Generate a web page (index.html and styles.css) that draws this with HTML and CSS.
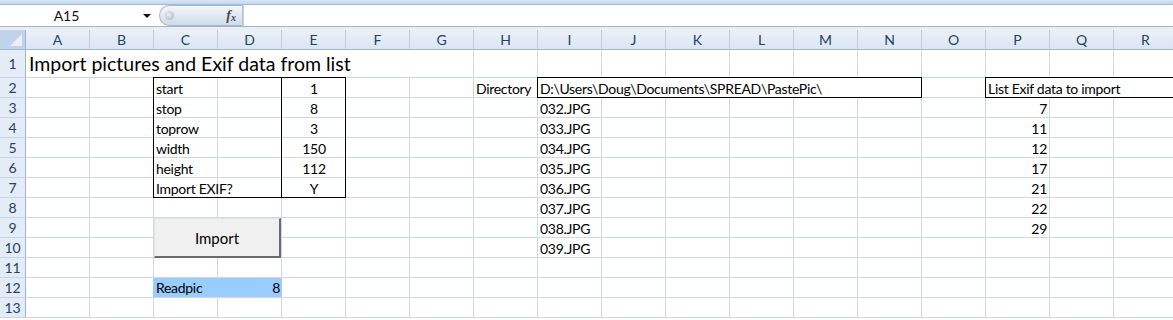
FILE: index.html
```html
<!DOCTYPE html>
<html lang="en">
<head>
  <meta charset="UTF-8" />
  <title>PastePic - Excel</title>
  <link rel="stylesheet" href="styles.css">
</head>
<body>
  <!-- Formula bar -->
  <div class="topband"></div>
  <div class="formula-bar">
    <div class="name-box">
      <span class="name">A15</span>
      <span class="caret"></span>
    </div>
    <div class="fx-pill">
      <span class="knob"></span>
      <span class="fx">f<sub>x</sub></span>
    </div>
    <div class="formula-input"></div>
  </div>
  <div class="bar-gap"></div>

  <!-- Sheet -->
  <div class="sheet">
    <div class="corner"><span class="corner-tri"></span></div>
    <div class="col-head">A</div>
    <div class="col-head">B</div>
    <div class="col-head">C</div>
    <div class="col-head">D</div>
    <div class="col-head">E</div>
    <div class="col-head">F</div>
    <div class="col-head">G</div>
    <div class="col-head">H</div>
    <div class="col-head">I</div>
    <div class="col-head">J</div>
    <div class="col-head">K</div>
    <div class="col-head">L</div>
    <div class="col-head">M</div>
    <div class="col-head">N</div>
    <div class="col-head">O</div>
    <div class="col-head">P</div>
    <div class="col-head">Q</div>
    <div class="col-head">R</div>

    <div class="row-head first">1</div>
    <div class="row-head">2</div>
    <div class="row-head">3</div>
    <div class="row-head">4</div>
    <div class="row-head">5</div>
    <div class="row-head">6</div>
    <div class="row-head">7</div>
    <div class="row-head">8</div>
    <div class="row-head">9</div>
    <div class="row-head">10</div>
    <div class="row-head">11</div>
    <div class="row-head">12</div>
    <div class="row-head">13</div>

    <!-- gridlines -->
    <div class="grid-row1"></div>
    <div class="grid-body"></div>

    <!-- row 1 -->
    <div class="cell title" style="grid-area: 2 / 2 / 3 / 8">Import pictures and Exif data from list</div>

    <!-- settings table C2:E7 -->
    <div class="box" style="grid-area: 3 / 4 / 9 / 6"></div>
    <div class="box" style="grid-area: 3 / 6 / 9 / 7"></div>
    <div class="cell" style="grid-area: 3 / 4 / 4 / 6">start</div>
    <div class="cell" style="grid-area: 4 / 4 / 5 / 6">stop</div>
    <div class="cell" style="grid-area: 5 / 4 / 6 / 6">toprow</div>
    <div class="cell" style="grid-area: 6 / 4 / 7 / 6">width</div>
    <div class="cell" style="grid-area: 7 / 4 / 8 / 6">height</div>
    <div class="cell" style="grid-area: 8 / 4 / 9 / 6">Import EXIF?</div>
    <div class="cell center" style="grid-area: 3 / 6">1</div>
    <div class="cell center" style="grid-area: 4 / 6">8</div>
    <div class="cell center" style="grid-area: 5 / 6">3</div>
    <div class="cell center" style="grid-area: 6 / 6">150</div>
    <div class="cell center" style="grid-area: 7 / 6">112</div>
    <div class="cell center" style="grid-area: 8 / 6">Y</div>

    <!-- readpic -->
    <div class="cell readpic" style="grid-area: 13 / 4 / 14 / 6"><span>Readpic</span><span>8</span></div>

    <!-- directory -->
    <div class="cell" style="grid-area: 3 / 9">Directory</div>
    <div class="box filled" style="grid-area: 3 / 10 / 4 / 16"></div>
    <div class="cell" style="grid-area: 3 / 10 / 4 / 16">D:\Users\Doug\Documents\SPREAD\PastePic\</div>
    <div class="cell" style="grid-area: 4 / 10">032.JPG</div>
    <div class="cell" style="grid-area: 5 / 10">033.JPG</div>
    <div class="cell" style="grid-area: 6 / 10">034.JPG</div>
    <div class="cell" style="grid-area: 7 / 10">035.JPG</div>
    <div class="cell" style="grid-area: 8 / 10">036.JPG</div>
    <div class="cell" style="grid-area: 9 / 10">037.JPG</div>
    <div class="cell" style="grid-area: 10 / 10">038.JPG</div>
    <div class="cell" style="grid-area: 11 / 10">039.JPG</div>

    <!-- exif list -->
    <div class="box filled open" style="grid-area: 3 / 17 / 4 / 20"></div>
    <div class="cell" style="grid-area: 3 / 17 / 4 / 20">List Exif data to import</div>
    <div class="cell right" style="grid-area: 4 / 17">7</div>
    <div class="cell right" style="grid-area: 5 / 17">11</div>
    <div class="cell right" style="grid-area: 6 / 17">12</div>
    <div class="cell right" style="grid-area: 7 / 17">17</div>
    <div class="cell right" style="grid-area: 8 / 17">21</div>
    <div class="cell right" style="grid-area: 9 / 17">22</div>
    <div class="cell right" style="grid-area: 10 / 17">29</div>

    <!-- floating button over the sheet -->
    <button class="import-btn">Import</button>
  </div>
</body>
</html>
```

FILE: styles.css
```css
body {
  margin: 0;
  font-family: Lato, "Open Sans", sans-serif;
  background: #fff;
  width: 1173px;
  height: 320px;
  overflow: hidden;
}

/* ---- formula bar ---- */
.topband {
  height: 4px;
  background: linear-gradient(#d9e5f4, #c3d6ee);
  border-bottom: 1px solid #9fbbe0;
}

.formula-bar {
  display: flex;
  height: 21px;
  border-bottom: 1px solid #a5b6ca;
  background: #fff;
}

.name-box {
  width: 155px;
  display: flex;
  align-items: center;
  position: relative;
}

.name {
  flex: 1;
  text-align: center;
  font-size: 14px;
  color: #111;
  padding-right: 10px;
}

.caret {
  width: 0;
  height: 0;
  border-left: 4px solid transparent;
  border-right: 4px solid transparent;
  border-top: 4px solid #111;
  margin-right: 4px;
}

.fx-pill {
  width: 84px;
  margin-left: 4px;
  border: 1px solid #a7b7cb;
  border-right-color: #b4c1d1;
  border-radius: 11px 0 0 11px;
  background: linear-gradient(#f4f7fb, #dfe7f1 55%, #cfdbe9);
  display: flex;
  align-items: center;
  justify-content: space-between;
  box-sizing: border-box;
}

.knob {
  width: 9px;
  height: 9px;
  border-radius: 50%;
  margin-left: 5px;
  background: radial-gradient(circle at 40% 40%, #eef0f3, #a9afb8);
}

.fx {
  font-family: "Liberation Serif", serif;
  font-style: italic;
  font-weight: bold;
  font-size: 14px;
  color: #4a4a4a;
  margin-right: 6px;
}

.fx sub {
  font-size: 10px;
  vertical-align: -1px;
}

.formula-input {
  flex: 1;
  border-left: 1px solid #c6d2e0;
}

.bar-gap {
  height: 3px;
  background: #e9eef5;
}

/* ---- sheet ---- */
.sheet {
  position: relative;
  display: grid;
  grid-template-columns: 26px repeat(18, 64px);
  grid-template-rows: 20px 28px repeat(12, 20px);
}

.corner {
  grid-area: 1 / 1;
  background: #c0d3ea;
  border-right: 1px solid #9eb6ce;
  border-bottom: 1px solid #9eb6ce;
  position: relative;
}

.corner-tri {
  position: absolute;
  right: 3px;
  bottom: 3px;
  width: 0;
  height: 0;
  border-left: 12px solid transparent;
  border-bottom: 12px solid #eaf0f8;
}

.col-head {
  grid-row: 1;
  background: linear-gradient(#eaf1f9, #dbe6f3);
  border-right: 1px solid #c0cfe0;
  border-bottom: 1px solid #9eb6ce;
  display: flex;
  align-items: center;
  justify-content: center;
  font-size: 14px;
  color: #27415f;
}

.row-head {
  grid-column: 1;
  background: #e4ecf7;
  border-right: 1px solid #9eb6ce;
  border-bottom: 1px solid #c5d5e8;
  display: flex;
  align-items: flex-end;
  justify-content: center;
  font-size: 14px;
  line-height: 19px;
  color: #27415f;
}

.row-head.first {
  align-items: center;
}

.grid-row1,
.grid-body {
  grid-column: 2 / -1;
  background-image: linear-gradient(to right, transparent 63px, #d0d7e5 63px);
  background-size: 64px 100%;
}

.grid-row1 {
  grid-row: 2;
  border-bottom: 1px solid #d0d7e5;
  box-sizing: border-box;
}

.grid-body {
  grid-row: 3 / -1;
  background-image:
    linear-gradient(to right, transparent 63px, #d0d7e5 63px),
    linear-gradient(to bottom, transparent 19px, #d0d7e5 19px);
  background-size: 64px 100%, 100% 20px;
}

.cell {
  font-size: 14px;
  letter-spacing: -0.3px;
  line-height: 19px;
  color: #000;
  padding: 0 2px;
  white-space: nowrap;
  display: flex;
  align-items: flex-end;
  min-width: 0;
}

.cell.center {
  justify-content: center;
}

.cell.right {
  justify-content: flex-end;
  padding-right: 3px;
}

.cell.title {
  font-size: 19.5px;
  letter-spacing: 0;
  line-height: 26px;
  background: #fff;
  padding-left: 3px;
  margin-bottom: 1px;
}

.box {
  border: 1px solid #000;
  margin: -1px 0 0 -1px;
}

.box.filled {
  background: #fff;
}

.box.open {
  border-right: none;
}

.readpic {
  background: #99ccff;
  justify-content: space-between;
  margin-left: -1px;
  padding-left: 3px;
  margin-bottom: 1px;
}

.import-btn {
  position: absolute;
  left: 154px;
  top: 188px;
  width: 127px;
  height: 40px;
  background: #f0f0f0;
  border-style: solid;
  border-width: 1px 2px 2px 1px;
  border-color: #e3e3e3 #6b6b6b #6b6b6b #e3e3e3;
  font-family: Lato, "Open Sans", sans-serif;
  font-size: 15px;
  color: #000;
  padding: 0;
}
```
